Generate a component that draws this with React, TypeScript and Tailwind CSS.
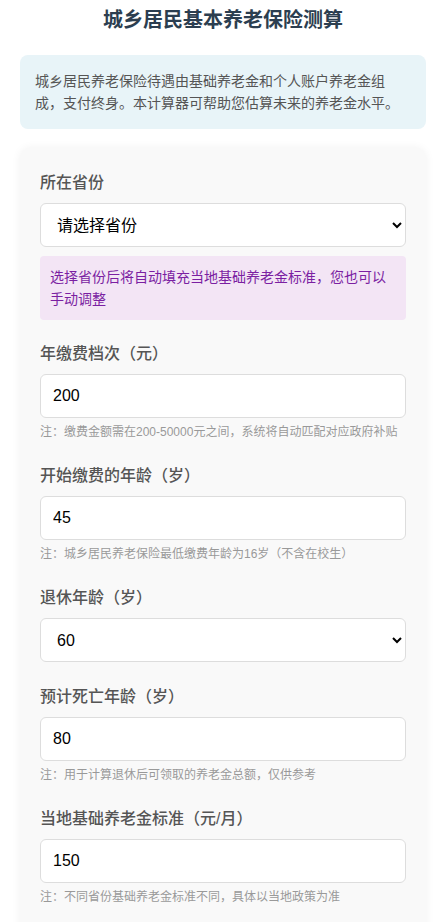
import React, { useState } from 'react';

const font = { fontFamily: '"Liberation Sans", "Noto Sans CJK SC", sans-serif' };

interface FieldProps {
  label: string;
  note?: string;
  children: React.ReactNode;
}

const Field: React.FC<FieldProps> = ({ label, note, children }) => (
  <div className="mb-[23px]">
    <label className="block text-base leading-6 font-medium text-[#555] mb-2">{label}</label>
    {children}
    {note && <p className="mt-[5px] text-xs leading-[18px] text-[#999]">{note}</p>}
  </div>
);

const inputCls =
  'block w-full h-[44px] px-3 text-base text-black bg-white border border-[#ddd] rounded-md outline-none';

export default function App() {
  const [province, setProvince] = useState('');
  const [amount, setAmount] = useState('200');
  const [startAge, setStartAge] = useState('45');
  const [retireAge, setRetireAge] = useState('60');
  const [deathAge, setDeathAge] = useState('80');
  const [base, setBase] = useState('150');

  return (
    <div className="min-h-screen bg-white px-5 pt-2 pb-10" style={font}>
      <h1 className="text-center text-xl leading-6 font-bold text-[#2c3e50] mb-[23px]">城乡居民基本养老保险测算</h1>

      <div className="bg-[#e8f4f8] rounded-lg px-[15px] py-[15px] text-sm leading-[22px] text-[#555] mb-[19px]">
        城乡居民养老保险待遇由基础养老金和个人账户养老金组成，支付终身。本计算器可帮助您估算未来的养老金水平。
      </div>

      <div className="bg-[#f9f9f9] rounded-[10px] shadow-[0_0_10px_rgba(0,0,0,0.06)] px-5 pt-[23px] pb-2">
        <div className="mb-[22px]">
          <label className="block text-base leading-6 font-medium text-[#555] mb-2">所在省份</label>
          <select className={inputCls} value={province} onChange={(e) => setProvince(e.target.value)}>
            <option value="">请选择省份</option>
            <option value="bj">北京</option>
            <option value="sh">上海</option>
            <option value="gd">广东</option>
          </select>
          <div className="mt-[9px] bg-[#f3e5f5] rounded px-[10px] py-[10px] text-sm leading-[22px] text-[#7b1fa2]">
            选择省份后将自动填充当地基础养老金标准，您也可以手动调整
          </div>
        </div>

        <Field label="年缴费档次（元）" note="注：缴费金额需在200-50000元之间，系统将自动匹配对应政府补贴">
          <input className={inputCls} value={amount} onChange={(e) => setAmount(e.target.value)} />
        </Field>

        <Field label="开始缴费的年龄（岁）" note="注：城乡居民养老保险最低缴费年龄为16岁（不含在校生）">
          <input className={inputCls} value={startAge} onChange={(e) => setStartAge(e.target.value)} />
        </Field>

        <Field label="退休年龄（岁）">
          <select className={inputCls} value={retireAge} onChange={(e) => setRetireAge(e.target.value)}>
            <option value="60">60</option>
            <option value="65">65</option>
          </select>
        </Field>

        <Field label="预计死亡年龄（岁）" note="注：用于计算退休后可领取的养老金总额，仅供参考">
          <input className={inputCls} value={deathAge} onChange={(e) => setDeathAge(e.target.value)} />
        </Field>

        <Field label="当地基础养老金标准（元/月）" note="注：不同省份基础养老金标准不同，具体以当地政策为准">
          <input className={inputCls} value={base} onChange={(e) => setBase(e.target.value)} />
        </Field>
      </div>
    </div>
  );
}
